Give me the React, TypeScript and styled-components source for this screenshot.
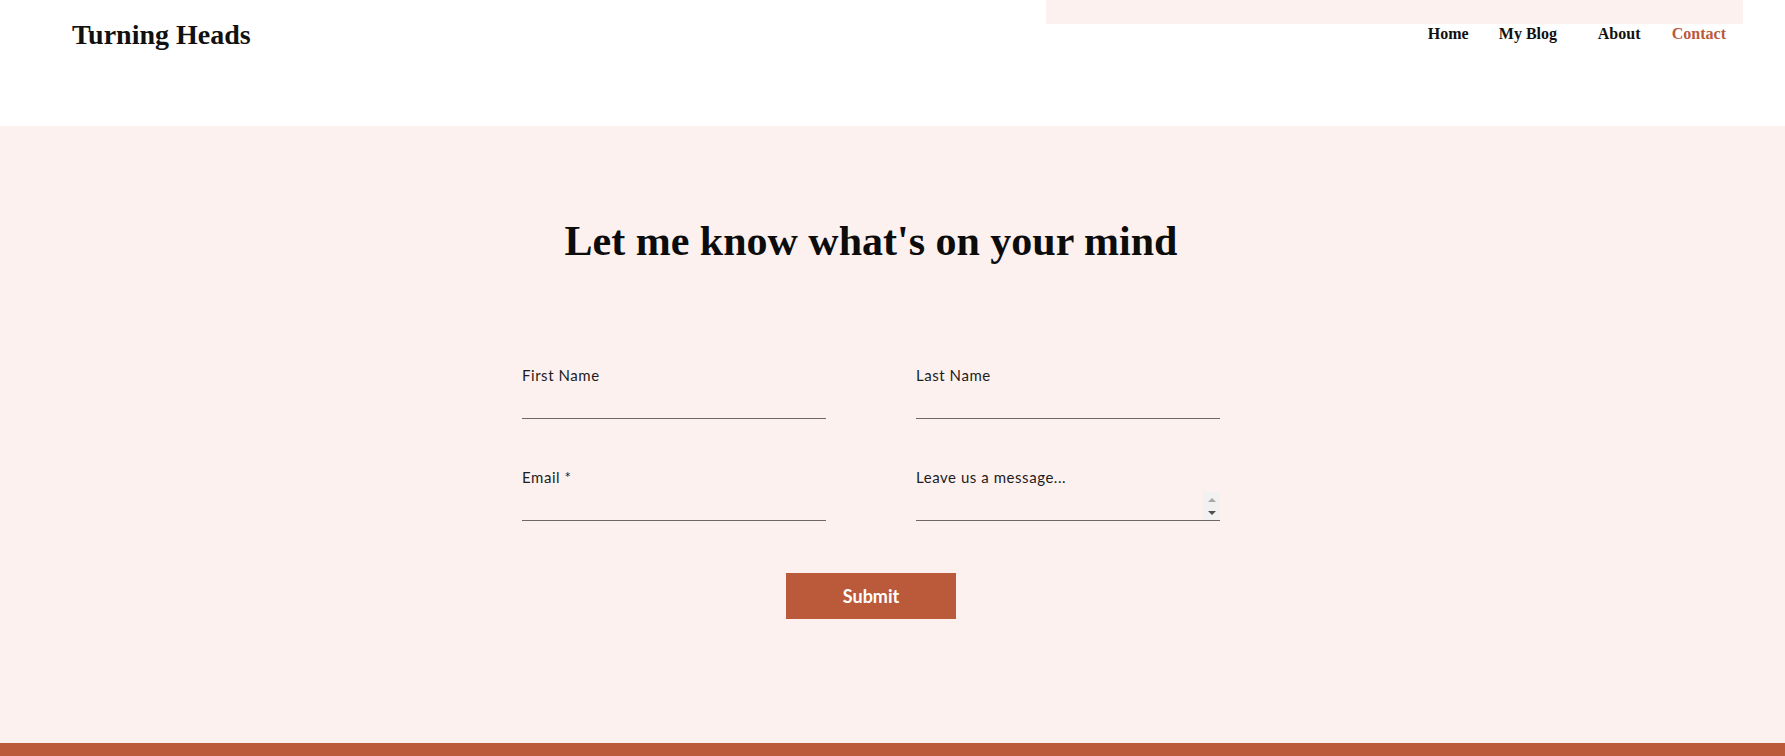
import React from 'react';
import styled, { createGlobalStyle } from 'styled-components';

const GlobalStyle = createGlobalStyle`
  html, body {
    margin: 0;
    padding: 0;
    overflow: hidden;
    background: #ffffff;
  }
  * { box-sizing: border-box; }
`;

const accent = '#ba5a3b';
const blush = '#fcf1ef';

const Header = styled.header`
  height: 126px;
  display: flex;
  justify-content: space-between;
  align-items: flex-start;
  padding: 0 42px 0 72px;
  background: #ffffff;
`;

const Logo = styled.div`
  padding-top: 21px;
  font-family: "Liberation Serif", serif;
  font-weight: 700;
  font-size: 28px;
  line-height: 1;
  color: #111111;
`;

const NavColumn = styled.div`
  width: 697px;
  display: flex;
  flex-direction: column;
  align-items: flex-end;
`;

const Strip = styled.div`
  width: 100%;
  height: 24px;
  background: ${blush};
`;

const Nav = styled.nav`
  display: grid;
  grid-template-columns: 71px 99px 74px auto;
  margin-top: 2px;
  padding-right: 17px;
`;

const NavLink = styled.a<{ $active?: boolean }>`
  font-family: "Liberation Serif", serif;
  font-weight: 700;
  font-size: 16px;
  line-height: 16px;
  color: ${p => (p.$active ? accent : '#111111')};
  text-decoration: none;
  cursor: pointer;
`;

const Section = styled.section`
  height: 617px;
  background: ${blush};
  padding: 90px 43px 0 0;
  display: flex;
  flex-direction: column;
  align-items: center;
`;

const Title = styled.h1`
  margin: 0;
  font-family: "Liberation Serif", serif;
  font-weight: 700;
  font-size: 42px;
  line-height: 50px;
  color: #0c0c0c;
`;

const Form = styled.form`
  margin-top: 100px;
  width: 698px;
  display: grid;
  grid-template-columns: 304px 304px;
  column-gap: 90px;
  row-gap: 49px;
`;

const Field = styled.label`
  display: flex;
  flex-direction: column;
  position: relative;
`;

const Label = styled.span`
  font-family: Lato, "Open Sans", sans-serif;
  font-size: 15px;
  line-height: 18px;
  letter-spacing: 0.55px;
  color: #1d1d1d;
`;

const Input = styled.input`
  height: 35px;
  border: none;
  border-bottom: 1px solid #6d6767;
  background: transparent;
  outline: none;
  font-family: Lato, sans-serif;
  font-size: 15px;
`;

const Message = styled.textarea`
  height: 35px;
  border: none;
  border-bottom: 1px solid #6d6767;
  background: transparent;
  outline: none;
  resize: none;
  overflow: hidden;
  font-family: Lato, sans-serif;
  font-size: 15px;
`;

const Spinner = styled.div`
  position: absolute;
  right: 0;
  bottom: 1px;
  width: 17px;
  height: 28px;
  background: #f1f1f1;
  display: flex;
  flex-direction: column;
  align-items: center;
  justify-content: space-between;
  padding: 6px 0 5px;
`;

const Arrow = styled.span<{ $down?: boolean }>`
  width: 0;
  height: 0;
  border-left: 4px solid transparent;
  border-right: 4px solid transparent;
  ${p =>
    p.$down
      ? `border-top: 4px solid #4f4f4f;`
      : `border-bottom: 4px solid #a8a8a8;`}
`;

const Submit = styled.button`
  margin-top: 52px;
  width: 170px;
  height: 46px;
  padding-bottom: 2px;
  border: none;
  background: ${accent};
  color: #ffffff;
  font-family: Lato, "Open Sans", sans-serif;
  font-weight: 700;
  font-size: 18px;
  cursor: pointer;
`;

const Footer = styled.footer`
  height: 13px;
  background: ${accent};
`;

const links = ['Home', 'My Blog', 'About', 'Contact'];

export default function App(): JSX.Element {
  return (
    <>
      <GlobalStyle />
      <Header>
        <Logo>Turning Heads</Logo>
        <NavColumn>
          <Strip />
          <Nav>
            {links.map(l => (
              <NavLink key={l} $active={l === 'Contact'}>{l}</NavLink>
            ))}
          </Nav>
        </NavColumn>
      </Header>
      <Section>
        <Title>Let me know what's on your mind</Title>
        <Form onSubmit={e => e.preventDefault()}>
          <Field>
            <Label>First Name</Label>
            <Input type="text" />
          </Field>
          <Field>
            <Label>Last Name</Label>
            <Input type="text" />
          </Field>
          <Field>
            <Label>Email *</Label>
            <Input type="email" />
          </Field>
          <Field>
            <Label>Leave us a message...</Label>
            <Message />
            <Spinner>
              <Arrow />
              <Arrow $down />
            </Spinner>
          </Field>
        </Form>
        <Submit type="submit">Submit</Submit>
      </Section>
      <Footer />
    </>
  );
}
